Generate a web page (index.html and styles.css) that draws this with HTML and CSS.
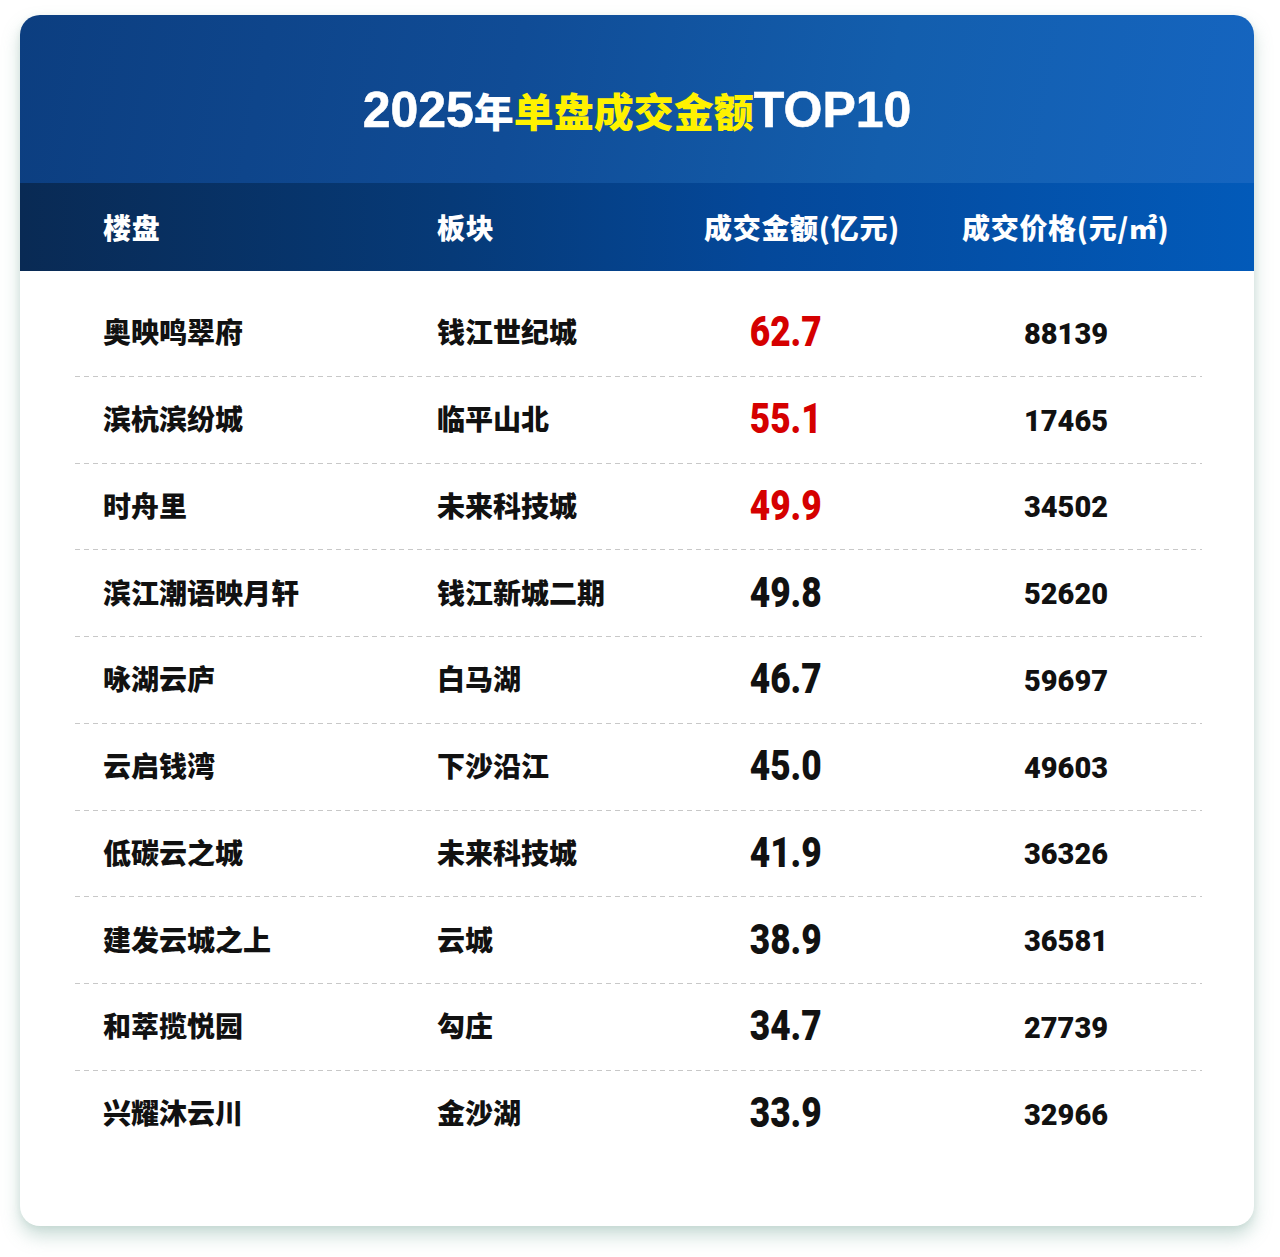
FILE: index.html
```html
<!DOCTYPE html>
<html lang="zh-CN">
<head>
<meta charset="utf-8">
<title>2025年单盘成交金额TOP10</title>
<link rel="stylesheet" href="styles.css">
</head>
<body>
<div class="page">
  <div class="card">
    <div class="title-bar">
      <h1 class="title"><span class="lat">2025</span><span class="cjk">年</span><span class="cjk hl">单盘成交金额</span><span class="lat">TOP10</span></h1>
    </div>
    <div class="thead">
      <div class="th">楼盘</div>
      <div class="th">板块</div>
      <div class="th">成交金额(亿元)</div>
      <div class="th">成交价格(元/㎡)</div>
    </div>
    <div class="tbody">
      <div class="row"><div class="name">奥映鸣翠府</div><div class="area">钱江世纪城</div><div class="amt red"><span>62.7</span></div><div class="price">88139</div></div>
      <div class="row"><div class="name">滨杭滨纷城</div><div class="area">临平山北</div><div class="amt red"><span>55.1</span></div><div class="price">17465</div></div>
      <div class="row"><div class="name">时舟里</div><div class="area">未来科技城</div><div class="amt red"><span>49.9</span></div><div class="price">34502</div></div>
      <div class="row"><div class="name">滨江潮语映月轩</div><div class="area">钱江新城二期</div><div class="amt"><span>49.8</span></div><div class="price">52620</div></div>
      <div class="row"><div class="name">咏湖云庐</div><div class="area">白马湖</div><div class="amt"><span>46.7</span></div><div class="price">59697</div></div>
      <div class="row"><div class="name">云启钱湾</div><div class="area">下沙沿江</div><div class="amt"><span>45.0</span></div><div class="price">49603</div></div>
      <div class="row"><div class="name">低碳云之城</div><div class="area">未来科技城</div><div class="amt"><span>41.9</span></div><div class="price">36326</div></div>
      <div class="row"><div class="name">建发云城之上</div><div class="area">云城</div><div class="amt"><span>38.9</span></div><div class="price">36581</div></div>
      <div class="row"><div class="name">和萃揽悦园</div><div class="area">勾庄</div><div class="amt"><span>34.7</span></div><div class="price">27739</div></div>
      <div class="row last"><div class="name">兴耀沐云川</div><div class="area">金沙湖</div><div class="amt"><span>33.9</span></div><div class="price">32966</div></div>
    </div>
  </div>
</div>
</body>
</html>
```
FILE: styles.css
```css
* { box-sizing: border-box; }
html, body { margin: 0; padding: 0; background: #ffffff; }
body {
  font-family: "Noto Sans CJK SC", "Liberation Sans", sans-serif;
  width: 1280px;
  height: 1257px;
  overflow: hidden;
}
.page {
  padding: 15px 26px 0 20px;
}
.card {
  width: 1234px;
  height: 1211px;
  background: #ffffff;
  border-radius: 20px;
  overflow: hidden;
  box-shadow: 0 10px 18px rgba(110, 160, 145, 0.35), 0 2px 6px rgba(120, 160, 150, 0.15);
}
.title-bar {
  height: 168px;
  background: linear-gradient(100deg, #0c3e80 0%, #104c96 40%, #135ead 70%, #1565c0 100%);
  display: flex;
  align-items: center;
  justify-content: center;
  padding-top: 22px;
}
.title {
  margin: 0;
  color: #ffffff;
  font-weight: 700;
  line-height: 1;
  display: flex;
  align-items: baseline;
}
.title .lat {
  font-family: "Liberation Sans", sans-serif;
  font-size: 50px;
  font-weight: 700;
  -webkit-text-stroke: 0.6px #ffffff;
}
.title .cjk {
  font-family: "Noto Sans CJK SC", sans-serif;
  font-size: 40px;
  font-weight: 900;
}
.title .hl { color: #fff200; }

.thead {
  height: 88px;
  background: linear-gradient(90deg, #092a54 0%, #063a78 35%, #04489a 60%, #025ab9 100%);
  display: grid;
  grid-template-columns: 334px 267px 258px 1fr;
  align-items: center;
  padding-left: 83px;
  color: #ffffff;
}
.th {
  font-size: 28px;
  font-weight: 900;
  letter-spacing: 0.7px;
}
.tbody {
  padding: 19px 52px 0 55px;
}
.row {
  height: 86.75px;
  display: grid;
  grid-template-columns: 362px 253px 132px 286px 1fr;
  align-items: center;
  background-image: repeating-linear-gradient(90deg, #c8c8c8 0, #c8c8c8 5px, transparent 5px, transparent 9px);
  background-size: 100% 1px;
  background-position: 0 100%;
  background-repeat: no-repeat;
}
.row.last { background-image: none; }
.name, .area {
  font-size: 28px;
  font-weight: 900;
  color: #111111;
  padding-bottom: 4px;
}
.name { padding-left: 28px; }
.amt {
  font-family: "Roboto", sans-serif;
  font-size: 42px;
  font-weight: 900;
  text-align: right;
  color: #111111;
  line-height: 1;
  padding-bottom: 2px;
}
.amt span {
  display: inline-block;
  transform: scaleX(0.84);
  transform-origin: right center;
}
.amt.red { color: #d50000; }
.price {
  font-family: "Roboto", sans-serif;
  font-size: 29px;
  font-weight: 900;
  text-align: right;
  color: #111111;
  line-height: 1;
  padding-top: 2px;
}
```
